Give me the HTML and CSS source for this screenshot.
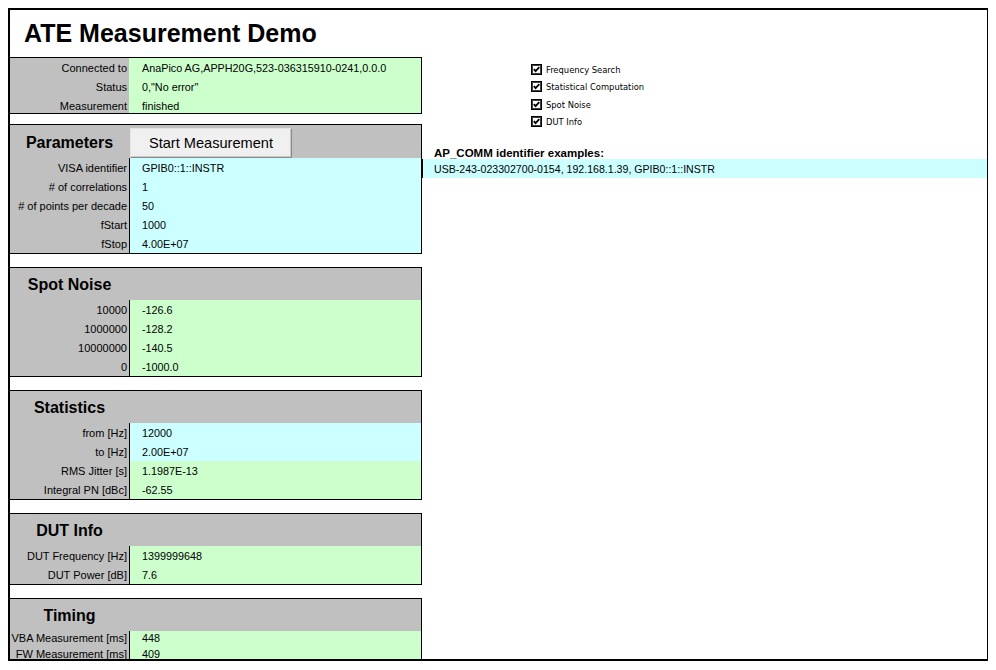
FILE: index.html
```html
<!DOCTYPE html>
<html lang="en">
<head>
<meta charset="utf-8">
<title>ATE Measurement Demo</title>
<link rel="stylesheet" href="styles.css">
</head>
<body>
<div class="frame">
  <h1 class="title">ATE Measurement Demo</h1>
  <div class="main">
    <div class="left">
      <section class="box info">
        <div class="row"><div class="lbl">Connected to</div><div class="val green">AnaPico AG,APPH20G,523-036315910-0241,0.0.0</div></div>
        <div class="row"><div class="lbl">Status</div><div class="val green">0,"No error"</div></div>
        <div class="row short"><div class="lbl">Measurement</div><div class="val green">finished</div></div>
      </section>

      <section class="box">
        <div class="head tall">
          <div class="head-title">Parameters</div>
          <button class="btn" type="button">Start Measurement</button>
        </div>
        <div class="row"><div class="lbl">VISA identifier</div><div class="val cyan div">GPIB0::1::INSTR</div></div>
        <div class="row"><div class="lbl"># of correlations</div><div class="val cyan div">1</div></div>
        <div class="row"><div class="lbl"># of points per decade</div><div class="val cyan div">50</div></div>
        <div class="row"><div class="lbl">fStart</div><div class="val cyan div">1000</div></div>
        <div class="row"><div class="lbl">fStop</div><div class="val cyan div">4.00E+07</div></div>
      </section>

      <section class="box">
        <div class="head"><div class="head-title">Spot Noise</div></div>
        <div class="row"><div class="lbl">10000</div><div class="val green div">-126.6</div></div>
        <div class="row"><div class="lbl">1000000</div><div class="val green div">-128.2</div></div>
        <div class="row"><div class="lbl">10000000</div><div class="val green div">-140.5</div></div>
        <div class="row"><div class="lbl">0</div><div class="val green div">-1000.0</div></div>
      </section>

      <section class="box">
        <div class="head"><div class="head-title">Statistics</div></div>
        <div class="row"><div class="lbl">from [Hz]</div><div class="val cyan div">12000</div></div>
        <div class="row"><div class="lbl">to [Hz]</div><div class="val cyan div">2.00E+07</div></div>
        <div class="row"><div class="lbl">RMS Jitter [s]</div><div class="val green div">1.1987E-13</div></div>
        <div class="row"><div class="lbl">Integral PN [dBc]</div><div class="val green div">-62.55</div></div>
      </section>

      <section class="box">
        <div class="head"><div class="head-title">DUT Info</div></div>
        <div class="row"><div class="lbl">DUT Frequency [Hz]</div><div class="val green div">1399999648</div></div>
        <div class="row"><div class="lbl">DUT Power [dB]</div><div class="val green div">7.6</div></div>
      </section>

      <section class="box">
        <div class="head"><div class="head-title">Timing</div></div>
        <div class="row tight"><div class="lbl">VBA Measurement [ms]</div><div class="val green div">448</div></div>
        <div class="row tight"><div class="lbl">FW Measurement [ms]</div><div class="val green div">409</div></div>
      </section>
    </div>

    <div class="right">
      <ul class="checks">
        <li class="check"><svg class="cb" width="11" height="11" viewBox="0 0 11 11"><rect x="0.5" y="0.5" width="10" height="10" fill="#fff" stroke="#000"/><rect x="1.5" y="1.5" width="8" height="8" fill="none" stroke="#404040"/><path d="M2.8 5.2 L4.6 7.2 L8.3 3.2" fill="none" stroke="#000" stroke-width="1.8"/></svg><span>Frequency Search</span></li>
        <li class="check"><svg class="cb" width="11" height="11" viewBox="0 0 11 11"><rect x="0.5" y="0.5" width="10" height="10" fill="#fff" stroke="#000"/><rect x="1.5" y="1.5" width="8" height="8" fill="none" stroke="#404040"/><path d="M2.8 5.2 L4.6 7.2 L8.3 3.2" fill="none" stroke="#000" stroke-width="1.8"/></svg><span>Statistical Computation</span></li>
        <li class="check"><svg class="cb" width="11" height="11" viewBox="0 0 11 11"><rect x="0.5" y="0.5" width="10" height="10" fill="#fff" stroke="#000"/><rect x="1.5" y="1.5" width="8" height="8" fill="none" stroke="#404040"/><path d="M2.8 5.2 L4.6 7.2 L8.3 3.2" fill="none" stroke="#000" stroke-width="1.8"/></svg><span>Spot Noise</span></li>
        <li class="check"><svg class="cb" width="11" height="11" viewBox="0 0 11 11"><rect x="0.5" y="0.5" width="10" height="10" fill="#fff" stroke="#000"/><rect x="1.5" y="1.5" width="8" height="8" fill="none" stroke="#404040"/><path d="M2.8 5.2 L4.6 7.2 L8.3 3.2" fill="none" stroke="#000" stroke-width="1.8"/></svg><span>DUT Info</span></li>
      </ul>
      <div class="ap-head">AP_COMM identifier examples:</div>
      <div class="ap-band">USB-243-023302700-0154, 192.168.1.39, GPIB0::1::INSTR</div>
    </div>
  </div>
</div>
</body>
</html>
```

FILE: styles.css
```css
html, body {
  background: #fff;
}
body {
  margin: 8px;
  font-family: "Liberation Sans", Arial, sans-serif;
  font-size: 11px;
  color: #000;
}
.frame {
  width: 977px;
  height: 649px;
  border: 2px solid #000;
  overflow: hidden;
  background: #fff;
}
.title {
  margin: 0;
  height: 47px;
  line-height: 47px;
  padding-left: 14px;
  font-size: 25px;
  font-weight: bold;
}
.main {
  display: flex;
  align-items: flex-start;
}
.left {
  width: 412px;
  flex: none;
  display: flex;
  flex-direction: column;
}
.box {
  border: 1px solid #000;
  border-left: none;
  background: #c0c0c0;
  margin-top: 13px;
}
.box.info {
  margin-top: 0;
}
.box.info + .box {
  margin-top: 10px;
}
.row {
  display: flex;
  height: 19px;
  line-height: 20.5px;
  white-space: nowrap;
}
.row.short {
  height: 17px;
}
.row.tight {
  height: 15.5px;
  line-height: 15px;
}
.lbl {
  width: 117px;
  padding-right: 2px;
  flex: none;
  text-align: right;
  background: #c0c0c0;
}
.val {
  flex: 1;
  padding-left: 13px;
  font-size: 10.8px;
}
.val.div {
  border-left: 1px solid #000;
  padding-left: 12px;
}
.green {
  background: #ccffcc;
}
.cyan {
  background: #ccffff;
}
.head {
  display: flex;
  align-items: flex-start;
  height: 32px;
  line-height: 34px;
}
.head.tall {
  height: 33px;
  line-height: 35px;
}
.head-title {
  width: 119px;
  flex: none;
  text-align: center;
  font-size: 16px;
  font-weight: bold;
}
.btn {
  margin: 3px 0 0 1px;
  width: 162px;
  height: 30px;
  padding: 0;
  font-family: "Liberation Sans", Arial, sans-serif;
  font-size: 14.6px;
  line-height: 28px;
  color: #000;
  background: #f0f0f0;
  border: 1px solid;
  border-color: #e3e3e3 #8a8a8a #8a8a8a #e3e3e3;
  box-shadow: inset -1px -1px 0 #c8c8c8;
}
.right {
  flex: 1;
}
.checks {
  list-style: none;
  margin: 3.5px 0 0 109px;
  padding: 0;
}
.check {
  display: flex;
  align-items: center;
  height: 17.5px;
  font-family: "DejaVu Sans Condensed", "DejaVu Sans", sans-serif;
  font-stretch: condensed;
  font-size: 9.3px;
}
.cb {
  display: block;
  flex: none;
  margin-right: 4px;
}
.ap-head {
  margin-top: 16px;
  padding-left: 12px;
  height: 12px;
  line-height: 13px;
  font-weight: bold;
  font-size: 11.5px;
}
.ap-band {
  height: 19px;
  line-height: 20.5px;
  border-left: 1px solid #000;
  padding-left: 11px;
  background: #ccffff;
  white-space: nowrap;
  font-size: 10.6px;
}
```
